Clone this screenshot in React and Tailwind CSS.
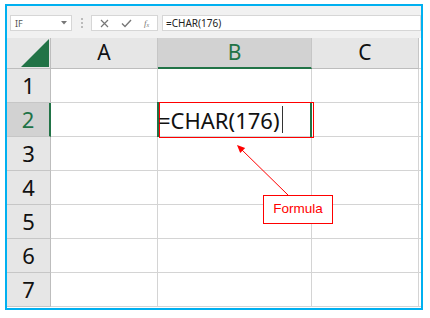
import React from 'react';

const cols = ['A', 'B', 'C'];
const rows = [1, 2, 3, 4, 5, 6, 7];
const font = { fontFamily: '"Noto Sans", "Liberation Sans", sans-serif' };

function FormulaBar() {
  return (
    <div className="h-[32px] bg-[#f1f1f1] flex items-start pt-[9px] pl-[3px]">
      <div className="w-[62px] h-[16px] bg-white border border-[#d6d6d6] flex items-center justify-between px-[4px]">
        <span className="text-[9px] text-[#555] leading-none">IF</span>
        <svg width="6" height="4" viewBox="0 0 6 4"><path d="M0 0h6L3 3.5z" fill="#777" /></svg>
      </div>
      <div className="w-[19px] h-[16px] flex flex-col items-center justify-center gap-[2px]">
        <span className="w-[2px] h-[2px] bg-[#bbb]" />
        <span className="w-[2px] h-[2px] bg-[#bbb]" />
        <span className="w-[2px] h-[2px] bg-[#bbb]" />
      </div>
      <div className="w-[67px] h-[16px] bg-white border border-[#d6d6d6] flex items-center pl-[8px] gap-[12px]">
        <svg width="9" height="9" viewBox="0 0 9 9"><path d="M1 1l7 7M8 1L1 8" stroke="#777" strokeWidth="1.2" /></svg>
        <svg width="11" height="9" viewBox="0 0 11 9"><path d="M1 4.5l3 3L10 1" stroke="#777" strokeWidth="1.4" fill="none" /></svg>
        <span className="text-[9px] italic text-[#777] leading-none" style={{ fontFamily: '"Liberation Serif", serif' }}>f<sub className="text-[6px]">x</sub></span>
      </div>
      <div className="ml-[4px] flex-1 h-[16px] bg-white border border-[#d6d6d6] flex items-center pl-[3px]">
        <span className="text-[10px] text-[#222] leading-none" style={font}>=CHAR(176)</span>
      </div>
    </div>
  );
}

function Header() {
  return (
    <>
      <div className="h-[31px] bg-[#e6e6e6] border-r border-b border-[#bdbdbd] flex items-end justify-end pr-[1px] pb-[1px]">
        <svg width="28" height="28" viewBox="0 0 28 28"><path d="M28 0V28H0z" fill="#217346" /></svg>
      </div>
      {cols.map((c) => (
        <div
          key={c}
          className={
            c === 'B'
              ? 'h-[31px] bg-[#d2d2d2] border-r border-[#c6c6c6] border-b-2 border-b-[#217346] flex items-center justify-center text-[21px] text-[#217346]'
              : 'h-[31px] bg-[#e6e6e6] border-r border-b border-[#c6c6c6] border-b-[#bdbdbd] flex items-center justify-center text-[21px] text-[#111]'
          }
        >
          {c}
        </div>
      ))}
      <div className="h-[31px] bg-white border-b border-[#d4d4d4]" />
    </>
  );
}

export default function App() {
  return (
    <div className="w-[430px] h-[318px] bg-white pt-[4px] pl-[5px]" style={font}>
      <div className="relative w-[418px] h-[306px] border-2 border-[#00b0f0] flex flex-col">
        <FormulaBar />
        <div className="grid grid-cols-[44px_107px_154px_107px_1fr]">
          <Header />
          {rows.map((r) => (
            <React.Fragment key={r}>
              <div
                className={
                  r === 2
                    ? 'h-[34px] bg-[#d2d2d2] border-b border-[#c6c6c6] border-r-2 border-r-[#217346] flex items-center justify-center text-[22px] text-[#217346]'
                    : 'h-[34px] bg-[#e6e6e6] border-b border-r border-[#c6c6c6] border-r-[#bdbdbd] flex items-center justify-center text-[22px] text-[#111]'
                }
              >
                {r}
              </div>
              <div className="h-[34px] border-r border-b border-[#d4d4d4]" />
              {r === 2 ? (
                <div className="relative h-[34px] border-r border-b border-[#d4d4d4] flex items-center">
                  <div className="absolute -left-px -top-px -right-px bottom-[-1px] border-l-2 border-r-2 border-[#217346]" />
                  <div className="absolute left-[1px] -top-px right-[-3px] bottom-[-2px] border border-[#ff0000]" />
                  <span className="relative text-[22px] text-[#111] leading-none">=CHAR(176)</span>
                  <span className="relative ml-[2px] w-[1.5px] h-[27px] bg-[#333]" />
                </div>
              ) : (
                <div className="h-[34px] border-r border-b border-[#d4d4d4]" />
              )}
              <div className="h-[34px] border-r border-b border-[#d4d4d4]" />
              <div className="h-[34px] border-b border-[#d4d4d4]" />
            </React.Fragment>
          ))}
        </div>
        <svg className="absolute left-0 top-0 pointer-events-none" width="414" height="302">
          <line x1="281" y1="189" x2="234" y2="143" stroke="#ff0000" strokeWidth="1" />
          <polygon points="230,139 238.2,142.1 233.2,147.1" fill="#ff0000" />
        </svg>
        <div className="absolute left-[256px] top-[189px] w-[70px] h-[29px] bg-white border border-[#ff0000] flex items-center justify-center">
          <span className="text-[13.5px] text-[#ff0000]" style={{ fontFamily: '"Liberation Sans", Arial, sans-serif' }}>Formula</span>
        </div>
      </div>
    </div>
  );
}
